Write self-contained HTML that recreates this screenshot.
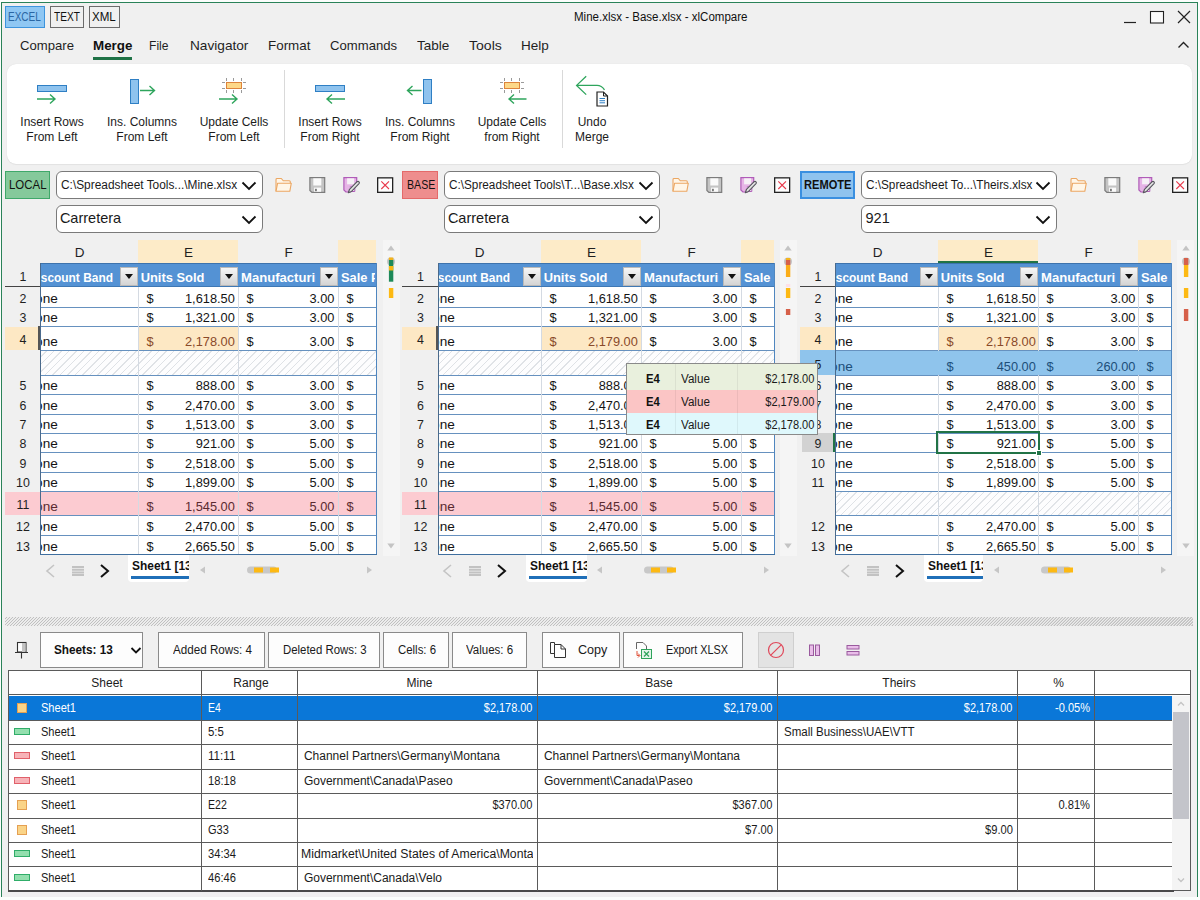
<!DOCTYPE html><html><head><meta charset="utf-8"><title>Mine.xlsx - Base.xlsx - xlCompare</title><style>
*{box-sizing:border-box;margin:0;padding:0}
html,body{width:1200px;height:900px;overflow:hidden;background:#fbfefc}
body{font-family:"Liberation Sans",sans-serif;font-size:12px;color:#1a1a1a;position:relative}
#win{position:absolute;left:1px;top:2px;width:1197px;height:895px;background:#f0f0f0;border:1px solid #2a8259;border-bottom:none}
.a{position:absolute}
.t{position:absolute;white-space:nowrap;line-height:1;color:#1a1a1a}
.w{color:#fff}
.box{position:absolute;border:1px solid #6b6b6b}
.combo{position:absolute;background:#fff;border:1px solid #7a7a7a;border-radius:6px}
.hl{position:absolute;background:#6691bf;height:1px}
.vl{position:absolute;background:#d4dae2;width:1px}
.fb{position:absolute;width:18px;height:19px;background:linear-gradient(#f6f6f6,#d4d4d4);border:1px solid #b9b9b9}
.fb:after{content:"";position:absolute;left:3.5px;top:6px;border:4.5px solid transparent;border-top:5px solid #111;border-bottom:none}
.hatch{position:absolute;background:repeating-linear-gradient(135deg,#fdfdfe 0,#fdfdfe 4px,#dfe2e6 4.3px,#dfe2e6 5px,#fdfdfe 5.3px)}
.btn{position:absolute;top:632px;height:36px;background:#fdfdfd;border:1px solid #8a8a8a}
.clip{position:absolute;overflow:hidden}
</style></head><body>
<div id="win"></div>
<div class="box" style="left:5px;top:6px;width:40px;height:22px;background:#8fc7f3;border-color:#3d94dd"></div>
<div class="box" style="left:50px;top:6px;width:34px;height:22px"></div>
<div class="box" style="left:89px;top:6px;width:31px;height:22px"></div>
<div class="t" style="top:11.4px;font-size:12.2px;color:#2a66a3;left:7.9px;transform:scaleX(0.82);transform-origin:0 0;">EXCEL</div>
<div class="t" style="top:11.4px;font-size:12.2px;color:#111;left:53.9px;transform:scaleX(0.83);transform-origin:0 0;">TEXT</div>
<div class="t" style="top:11.4px;font-size:12.2px;color:#111;left:91.9px;transform:scaleX(0.95);transform-origin:0 0;">XML</div>
<div class="t" style="top:10.5px;font-size:12px;color:#111;left:573.9px;transform:scaleX(0.96);transform-origin:0 0;">Mine.xlsx - Base.xlsx - xlCompare</div>
<svg class="a" style="left:1120px;top:6px" width="76" height="46" viewBox="0 0 76 46" fill="none" stroke="#222" stroke-width="1.2"><path d="M4 16.500H16"/><rect x="30.500" y="5.500" width="13" height="11.500" stroke-width="1.100" fill="#fbfbfb"/><path d="M58 5L70 17M70 5L58 17"/><path d="M58.500 41.500L63.500 36.500L68.500 41.500" stroke-width="1.400"/></svg>
<div class="t" style="top:39px;font-size:13px;color:#1f1f1f;left:19.9px;transform:scaleX(1.01);transform-origin:0 0;">Compare</div>
<div class="t" style="top:39px;font-size:13px;font-weight:bold;color:#111;left:93.15px;transform:scaleX(1.03);transform-origin:0 0;">Merge</div>
<div class="t" style="top:39px;font-size:13px;color:#1f1f1f;left:149.4px;transform:scaleX(0.93);transform-origin:0 0;">File</div>
<div class="t" style="top:39px;font-size:13px;color:#1f1f1f;left:189.9px;transform:scaleX(1.05);transform-origin:0 0;">Navigator</div>
<div class="t" style="top:39px;font-size:13px;color:#1f1f1f;left:268.4px;transform:scaleX(1.03);transform-origin:0 0;">Format</div>
<div class="t" style="top:39px;font-size:13px;color:#1f1f1f;left:330.4px;transform:scaleX(1.01);transform-origin:0 0;">Commands</div>
<div class="t" style="top:39px;font-size:13px;color:#1f1f1f;left:417.4px;transform:scaleX(1.04);transform-origin:0 0;">Table</div>
<div class="t" style="top:39px;font-size:13px;color:#1f1f1f;left:469.4px;transform:scaleX(1.08);transform-origin:0 0;">Tools</div>
<div class="t" style="top:39px;font-size:13px;color:#1f1f1f;left:521.4px;transform:scaleX(1.04);transform-origin:0 0;">Help</div>
<div class="a" style="left:93px;top:57px;width:39px;height:3px;background:#1f7246"></div>
<div class="a" style="left:7px;top:64px;width:1185px;height:100px;background:#fff;border-radius:9px;box-shadow:0 0 1px #d4d4d4,0 1px 1px #e4e4e4"></div>
<div class="a" style="left:284px;top:70px;width:1px;height:78px;background:#d9d9d9"></div>
<div class="a" style="left:562px;top:70px;width:1px;height:78px;background:#d9d9d9"></div>
<svg class="a" style="left:0;top:64px" width="640" height="100" viewBox="0 64 640 100" fill="none">
<g stroke="#2ea55c" stroke-width="1.4">
<path d="M37 99H55M50 94.500L55 99L50 103.500"/>
<path d="M140 90.500H154M149.500 86L154.500 90.500L149.500 95"/>
<path d="M219 99H237M232 94.500L237 99L232 103.500"/>
<path d="M345 99H327M332 94.500L327 99L332 103.500"/>
<path d="M421.500 90.500H408M412.500 86L407.500 90.500L412.500 95"/>
<path d="M526.500 99H509M514 94.500L509 99L514 103.500"/>
<path d="M586.200 76.200L576.600 85.400L586.200 94.600M577 85.400H597C601 85.400 603 87.500 604.500 89.800" stroke-width="1.300"/>
</g>
<g fill="#8fc3ee" stroke="#2f7fc4">
<rect x="37.500" y="85.500" width="29" height="6"/>
<rect x="130.500" y="79.500" width="8" height="24"/>
<rect x="315.500" y="85.500" width="29" height="6"/>
<rect x="423.500" y="79.500" width="8" height="24"/>
</g>
<g stroke="#9a9a9a" stroke-width="1">
<path d="M226.500 78V81M233.500 78V81M241.500 78V81M226.500 90V93M233.500 90V93M241.500 90V93M222 82.500H225M222 88.500H225M243 82.500H246M243 88.500H246"/>
<path d="M504.500 78V81M511.500 78V81M519.500 78V81M504.500 90V93M511.500 90V93M519.500 90V93M500 82.500H503M500 88.500H503M521 82.500H524M521 88.500H524"/>
</g>
<g fill="#fdd888" stroke="#dd843c">
<rect x="226.500" y="82.500" width="15" height="6"/>
<rect x="504.500" y="82.500" width="15" height="6"/>
</g>
<path d="M597 92H603.500L607.500 96V106H597Z" fill="#fff" stroke="#222" stroke-width="1.200"/>
<path d="M603.500 92V96H607.500" stroke="#222" stroke-width="1"/>
<path d="M599.500 98.500H605M599.500 100.700H605M599.500 102.800H605" stroke="#2f7fc4" stroke-width="1"/>
</svg>
<div class="t" style="top:115.7px;font-size:12px;color:#1c1c1c;left:20.32px;">Insert Rows</div>
<div class="t" style="top:130.7px;font-size:12px;color:#1c1c1c;left:26.33px;">From Left</div>
<div class="t" style="top:115.7px;font-size:12px;color:#1c1c1c;left:106.99px;">Ins. Columns</div>
<div class="t" style="top:130.7px;font-size:12px;color:#1c1c1c;left:116.33px;">From Left</div>
<div class="t" style="top:115.7px;font-size:12px;color:#1c1c1c;left:199.65px;">Update Cells</div>
<div class="t" style="top:130.7px;font-size:12px;color:#1c1c1c;left:208.33px;">From Left</div>
<div class="t" style="top:115.7px;font-size:12px;color:#1c1c1c;left:298.32px;">Insert Rows</div>
<div class="t" style="top:130.7px;font-size:12px;color:#1c1c1c;left:300.33px;">From Right</div>
<div class="t" style="top:115.7px;font-size:12px;color:#1c1c1c;left:384.99px;">Ins. Columns</div>
<div class="t" style="top:130.7px;font-size:12px;color:#1c1c1c;left:390.33px;">From Right</div>
<div class="t" style="top:115.7px;font-size:12px;color:#1c1c1c;left:477.65px;">Update Cells</div>
<div class="t" style="top:130.7px;font-size:12px;color:#1c1c1c;left:484.33px;">from Right</div>
<div class="t" style="top:115.7px;font-size:12px;color:#1c1c1c;left:577.66px;">Undo</div>
<div class="t" style="top:130.7px;font-size:12px;color:#1c1c1c;left:574.99px;">Merge</div>
<div class="a" style="left:5px;top:171px;width:45px;height:28px;background:#85c99b;border:1px solid #3fa86a"></div>
<div class="t" style="top:179.4px;font-size:12.2px;color:#111;left:8.9px;transform:scaleX(0.94);transform-origin:0 0;">LOCAL</div>
<div class="combo" style="left:56px;top:171px;width:207px;height:28px"></div>
<div class="t" style="top:179.3px;font-size:12px;color:#1a1a1a;left:60.9px;transform:scaleX(0.99);transform-origin:0 0;">C:\Spreadsheet Tools...\Mine.xlsx</div>
<svg class="a" style="left:240.5px;top:181px" width="16" height="10" viewBox="0 0 16 10" fill="none"><path d="M1.500 1.500L8 8L14.500 1.500" stroke="#111" stroke-width="1.800"/></svg>
<div class="combo" style="left:56px;top:205px;width:207px;height:28px"></div>
<div class="t" style="top:210.75px;font-size:14.5px;color:#1a1a1a;left:59.9px;">Carretera</div>
<svg class="a" style="left:240.5px;top:214.5px" width="16" height="10" viewBox="0 0 16 10" fill="none"><path d="M1.500 1.500L8 8L14.500 1.500" stroke="#111" stroke-width="1.800"/></svg>
<svg class="a" style="left:275px;top:176px" width="120" height="19" viewBox="0 0 120 19" fill="none"><path d="M1 15.300V3.400Q1 2.500 2 2.500H6.300L8.300 4.800H14.300Q15.300 4.800 15.300 5.800V7.200" fill="#fff6e8" stroke="#eba763" stroke-width="1.100"/><path d="M1 15.300L2.600 7.200H16.300L14.800 15.300Z" fill="#fff6e8" stroke="#eba763" stroke-width="1.100" stroke-linejoin="round"/><g transform="translate(34.300 0)"><path d="M0.600 1.700H15.400V16.400H2.600L0.600 14.400Z" fill="#c4c4c4" stroke="#7c7c7c" stroke-width="1.200"/><rect x="4" y="2.300" width="8" height="7.200" fill="#fafafa"/><rect x="4.800" y="11.600" width="7" height="4.200" fill="#fafafa"/><rect x="6" y="12.800" width="1.300" height="2.400" fill="#444"/></g><g transform="translate(68.300 0)"><path d="M0.600 1.700H13.400V7L7 16H2.600L0.600 14Z" fill="#e6b4e6" stroke="#b05cb8" stroke-width="1.200"/><rect x="3.800" y="2.300" width="7" height="6" fill="#f6f0f6"/><path d="M6.500 11H11.500V15.500H8" fill="#f6f0f6" stroke="#b05cb8" stroke-width="1"/><path d="M5 16.800L6.200 13.300L13.800 5.700Q14.800 4.900 15.700 5.800Q16.500 6.700 15.700 7.600L8.200 15.400Z" fill="#e4e4e4" stroke="#55555c" stroke-width="1.100" stroke-linejoin="round"/></g><g transform="translate(102 0)"><rect x="0.650" y="1.850" width="15" height="14.500" fill="#fdfdfd" stroke="#222" stroke-width="1.300"/><path d="M4.300 5.300L12 13M12 5.300L4.300 13" stroke="#e8384a" stroke-width="1.100"/></g></svg>
<div class="a" style="left:402px;top:171px;width:36px;height:28px;background:#ee8e8e;border:1px solid #e46a6a"></div>
<div class="t" style="top:179.4px;font-size:12.2px;color:#111;left:406.9px;transform:scaleX(0.87);transform-origin:0 0;">BASE</div>
<div class="combo" style="left:444px;top:171px;width:216px;height:28px"></div>
<div class="t" style="top:179.3px;font-size:12px;color:#1a1a1a;left:448.9px;transform:scaleX(0.98);transform-origin:0 0;">C:\Spreadsheet Tools\T...\Base.xlsx</div>
<svg class="a" style="left:637.5px;top:181px" width="16" height="10" viewBox="0 0 16 10" fill="none"><path d="M1.500 1.500L8 8L14.500 1.500" stroke="#111" stroke-width="1.800"/></svg>
<div class="combo" style="left:444px;top:205px;width:216px;height:28px"></div>
<div class="t" style="top:210.75px;font-size:14.5px;color:#1a1a1a;left:447.9px;">Carretera</div>
<svg class="a" style="left:637.5px;top:214.5px" width="16" height="10" viewBox="0 0 16 10" fill="none"><path d="M1.500 1.500L8 8L14.500 1.500" stroke="#111" stroke-width="1.800"/></svg>
<svg class="a" style="left:672px;top:176px" width="120" height="19" viewBox="0 0 120 19" fill="none"><path d="M1 15.300V3.400Q1 2.500 2 2.500H6.300L8.300 4.800H14.300Q15.300 4.800 15.300 5.800V7.200" fill="#fff6e8" stroke="#eba763" stroke-width="1.100"/><path d="M1 15.300L2.600 7.200H16.300L14.800 15.300Z" fill="#fff6e8" stroke="#eba763" stroke-width="1.100" stroke-linejoin="round"/><g transform="translate(34.300 0)"><path d="M0.600 1.700H15.400V16.400H2.600L0.600 14.400Z" fill="#c4c4c4" stroke="#7c7c7c" stroke-width="1.200"/><rect x="4" y="2.300" width="8" height="7.200" fill="#fafafa"/><rect x="4.800" y="11.600" width="7" height="4.200" fill="#fafafa"/><rect x="6" y="12.800" width="1.300" height="2.400" fill="#444"/></g><g transform="translate(68.300 0)"><path d="M0.600 1.700H13.400V7L7 16H2.600L0.600 14Z" fill="#e6b4e6" stroke="#b05cb8" stroke-width="1.200"/><rect x="3.800" y="2.300" width="7" height="6" fill="#f6f0f6"/><path d="M6.500 11H11.500V15.500H8" fill="#f6f0f6" stroke="#b05cb8" stroke-width="1"/><path d="M5 16.800L6.200 13.300L13.800 5.700Q14.800 4.900 15.700 5.800Q16.500 6.700 15.700 7.600L8.200 15.400Z" fill="#e4e4e4" stroke="#55555c" stroke-width="1.100" stroke-linejoin="round"/></g><g transform="translate(102 0)"><rect x="0.650" y="1.850" width="15" height="14.500" fill="#fdfdfd" stroke="#222" stroke-width="1.300"/><path d="M4.300 5.300L12 13M12 5.300L4.300 13" stroke="#e8384a" stroke-width="1.100"/></g></svg>
<div class="a" style="left:800px;top:171px;width:55px;height:28px;background:#8fc3ee;border:2px solid #3a8fe0"></div>
<div class="t" style="top:179.4px;font-size:12.2px;font-weight:bold;color:#111;left:803.9px;transform:scaleX(0.91);transform-origin:0 0;">REMOTE</div>
<div class="combo" style="left:861px;top:171px;width:196px;height:28px"></div>
<div class="t" style="top:179.3px;font-size:12px;color:#1a1a1a;left:865.9px;transform:scaleX(0.98);transform-origin:0 0;">C:\Spreadsheet To...\Theirs.xlsx</div>
<svg class="a" style="left:1034.5px;top:181px" width="16" height="10" viewBox="0 0 16 10" fill="none"><path d="M1.500 1.500L8 8L14.500 1.500" stroke="#111" stroke-width="1.800"/></svg>
<div class="combo" style="left:861px;top:205px;width:196px;height:28px"></div>
<div class="t" style="top:210.75px;font-size:14.5px;color:#1a1a1a;left:865.5px;">921</div>
<svg class="a" style="left:1034.5px;top:214.5px" width="16" height="10" viewBox="0 0 16 10" fill="none"><path d="M1.500 1.500L8 8L14.500 1.500" stroke="#111" stroke-width="1.800"/></svg>
<svg class="a" style="left:1070px;top:176px" width="120" height="19" viewBox="0 0 120 19" fill="none"><path d="M1 15.300V3.400Q1 2.500 2 2.500H6.300L8.300 4.800H14.300Q15.300 4.800 15.300 5.800V7.200" fill="#fff6e8" stroke="#eba763" stroke-width="1.100"/><path d="M1 15.300L2.600 7.200H16.300L14.800 15.300Z" fill="#fff6e8" stroke="#eba763" stroke-width="1.100" stroke-linejoin="round"/><g transform="translate(34.300 0)"><path d="M0.600 1.700H15.400V16.400H2.600L0.600 14.400Z" fill="#c4c4c4" stroke="#7c7c7c" stroke-width="1.200"/><rect x="4" y="2.300" width="8" height="7.200" fill="#fafafa"/><rect x="4.800" y="11.600" width="7" height="4.200" fill="#fafafa"/><rect x="6" y="12.800" width="1.300" height="2.400" fill="#444"/></g><g transform="translate(68.300 0)"><path d="M0.600 1.700H13.400V7L7 16H2.600L0.600 14Z" fill="#e6b4e6" stroke="#b05cb8" stroke-width="1.200"/><rect x="3.800" y="2.300" width="7" height="6" fill="#f6f0f6"/><path d="M6.500 11H11.500V15.500H8" fill="#f6f0f6" stroke="#b05cb8" stroke-width="1"/><path d="M5 16.800L6.200 13.300L13.800 5.700Q14.800 4.900 15.700 5.800Q16.500 6.700 15.700 7.600L8.200 15.400Z" fill="#e4e4e4" stroke="#55555c" stroke-width="1.100" stroke-linejoin="round"/></g><g transform="translate(102 0)"><rect x="0.650" y="1.850" width="15" height="14.500" fill="#fdfdfd" stroke="#222" stroke-width="1.300"/><path d="M4.300 5.300L12 13M12 5.300L4.300 13" stroke="#e8384a" stroke-width="1.100"/></g></svg>
<div class="a" style="left:138px;top:240px;width:100px;height:23px;background:#fdebc8"></div>
<div class="a" style="left:338px;top:240px;width:38px;height:23px;background:#fdebc8"></div>
<div class="t" style="top:246.25px;font-size:13.5px;color:#1f1f1f;left:74.63px;">D</div>
<div class="t" style="top:246.25px;font-size:13.5px;color:#1f1f1f;left:184px;">E</div>
<div class="t" style="top:246.25px;font-size:13.5px;color:#1f1f1f;left:284.38px;">F</div>
<div class="a" style="left:40px;top:263px;width:336px;height:292px;background:#fff"></div>
<div class="a" style="left:40px;top:263px;width:336px;height:24px;background:#5492d4;border-top:1px solid #3d73ad"></div>
<div class="t" style="top:270.8px;font-size:12.4px;color:#1f1f1f;left:19.55px;">1</div>
<div class="a" style="left:5px;top:286px;width:35px;height:1px;background:#444"></div>
<div class="clip" style="left:41px;top:264px;width:72.3px;height:22px">
<div class="t w" style="right:0;top:7.55px;font-size:12.9px;font-weight:bold;transform:scaleX(.925);transform-origin:100% 0">Discount Band</div></div>
<div class="fb" style="left:120px;top:267px"></div>
<div class="t" style="top:271.55px;font-size:12.9px;font-weight:bold;color:#fff;left:140.7px;">Units Sold</div>
<div class="fb" style="left:220px;top:267px"></div>
<div class="clip" style="left:241px;top:264px;width:74.8px;height:22px">
<div class="t w" style="left:0;top:7.45px;font-size:13.1px;font-weight:bold">Manufacturing Price</div></div>
<div class="fb" style="left:320px;top:267px"></div>
<div class="clip" style="left:341px;top:264px;width:34px;height:22px">
<div class="t w" style="left:0;top:7.55px;font-size:12.9px;font-weight:bold">Sale Price</div></div>
<div class="t" style="top:292.6px;font-size:12.4px;color:#1f1f1f;left:19.55px;">2</div>
<div class="clip" style="left:41px;top:288px;width:40px;height:19px"><div class="t" style="left:-5.9px;top:4.4px;font-size:13.6px;color:#141414">one</div></div>
<div class="t" style="top:292.6px;font-size:12.8px;color:#141414;left:146.5px;">$</div>
<div class="t" style="top:292.6px;font-size:12.8px;color:#141414;right:965.2px;">1,618.50</div>
<div class="t" style="top:292.6px;font-size:12.8px;color:#141414;left:246.5px;">$</div>
<div class="t" style="top:292.6px;font-size:12.8px;color:#141414;right:865.6px;">3.00</div>
<div class="t" style="top:292.6px;font-size:12.8px;color:#141414;left:346.5px;">$</div>
<div class="t" style="top:311.6px;font-size:12.4px;color:#1f1f1f;left:19.55px;">3</div>
<div class="clip" style="left:41px;top:308px;width:40px;height:18px"><div class="t" style="left:-5.9px;top:3.4px;font-size:13.6px;color:#141414">one</div></div>
<div class="t" style="top:311.6px;font-size:12.8px;color:#141414;left:146.5px;">$</div>
<div class="t" style="top:311.6px;font-size:12.8px;color:#141414;right:965.2px;">1,321.00</div>
<div class="t" style="top:311.6px;font-size:12.8px;color:#141414;left:246.5px;">$</div>
<div class="t" style="top:311.6px;font-size:12.8px;color:#141414;right:865.6px;">3.00</div>
<div class="t" style="top:311.6px;font-size:12.8px;color:#141414;left:346.5px;">$</div>
<div class="a" style="left:5px;top:327px;width:35px;height:23px;background:#fde8c4"></div>
<div class="a" style="left:138px;top:327px;width:100px;height:23px;background:#fde8c4"></div>
<div class="a" style="left:38px;top:326px;width:2px;height:24px;background:#555"></div>
<div class="t" style="top:334.1px;font-size:12.4px;color:#1f1f1f;left:19.55px;">4</div>
<div class="clip" style="left:41px;top:327px;width:40px;height:23px"><div class="t" style="left:-5.9px;top:8.4px;font-size:13.6px;color:#141414">one</div></div>
<div class="t" style="top:335.6px;font-size:12.8px;color:#8a4a2a;left:146.5px;">$</div>
<div class="t" style="top:335.6px;font-size:12.8px;color:#8a4a2a;right:965.2px;">2,178.00</div>
<div class="t" style="top:335.6px;font-size:12.8px;color:#141414;left:246.5px;">$</div>
<div class="t" style="top:335.6px;font-size:12.8px;color:#141414;right:865.6px;">3.00</div>
<div class="t" style="top:335.6px;font-size:12.8px;color:#141414;left:346.5px;">$</div>
<div class="hatch" style="left:40px;top:351px;width:336px;height:24px"></div>
<div class="t" style="top:379.6px;font-size:12.4px;color:#1f1f1f;left:19.55px;">5</div>
<div class="clip" style="left:41px;top:376px;width:40px;height:18px"><div class="t" style="left:-5.9px;top:3.4px;font-size:13.6px;color:#141414">one</div></div>
<div class="t" style="top:379.6px;font-size:12.8px;color:#141414;left:146.5px;">$</div>
<div class="t" style="top:379.6px;font-size:12.8px;color:#141414;right:965.2px;">888.00</div>
<div class="t" style="top:379.6px;font-size:12.8px;color:#141414;left:246.5px;">$</div>
<div class="t" style="top:379.6px;font-size:12.8px;color:#141414;right:865.6px;">3.00</div>
<div class="t" style="top:379.6px;font-size:12.8px;color:#141414;left:346.5px;">$</div>
<div class="t" style="top:399.6px;font-size:12.4px;color:#1f1f1f;left:19.55px;">6</div>
<div class="clip" style="left:41px;top:395px;width:40px;height:19px"><div class="t" style="left:-5.9px;top:4.4px;font-size:13.6px;color:#141414">one</div></div>
<div class="t" style="top:399.6px;font-size:12.8px;color:#141414;left:146.5px;">$</div>
<div class="t" style="top:399.6px;font-size:12.8px;color:#141414;right:965.2px;">2,470.00</div>
<div class="t" style="top:399.6px;font-size:12.8px;color:#141414;left:246.5px;">$</div>
<div class="t" style="top:399.6px;font-size:12.8px;color:#141414;right:865.6px;">3.00</div>
<div class="t" style="top:399.6px;font-size:12.8px;color:#141414;left:346.5px;">$</div>
<div class="t" style="top:418.6px;font-size:12.4px;color:#1f1f1f;left:19.55px;">7</div>
<div class="clip" style="left:41px;top:415px;width:40px;height:18px"><div class="t" style="left:-5.9px;top:3.4px;font-size:13.6px;color:#141414">one</div></div>
<div class="t" style="top:418.6px;font-size:12.8px;color:#141414;left:146.5px;">$</div>
<div class="t" style="top:418.6px;font-size:12.8px;color:#141414;right:965.2px;">1,513.00</div>
<div class="t" style="top:418.6px;font-size:12.8px;color:#141414;left:246.5px;">$</div>
<div class="t" style="top:418.6px;font-size:12.8px;color:#141414;right:865.6px;">3.00</div>
<div class="t" style="top:418.6px;font-size:12.8px;color:#141414;left:346.5px;">$</div>
<div class="t" style="top:437.6px;font-size:12.4px;color:#1f1f1f;left:19.55px;">8</div>
<div class="clip" style="left:41px;top:434px;width:40px;height:18px"><div class="t" style="left:-5.9px;top:3.4px;font-size:13.6px;color:#141414">one</div></div>
<div class="t" style="top:437.6px;font-size:12.8px;color:#141414;left:146.5px;">$</div>
<div class="t" style="top:437.6px;font-size:12.8px;color:#141414;right:965.2px;">921.00</div>
<div class="t" style="top:437.6px;font-size:12.8px;color:#141414;left:246.5px;">$</div>
<div class="t" style="top:437.6px;font-size:12.8px;color:#141414;right:865.6px;">5.00</div>
<div class="t" style="top:437.6px;font-size:12.8px;color:#141414;left:346.5px;">$</div>
<div class="t" style="top:457.6px;font-size:12.4px;color:#1f1f1f;left:19.55px;">9</div>
<div class="clip" style="left:41px;top:453px;width:40px;height:19px"><div class="t" style="left:-5.9px;top:4.4px;font-size:13.6px;color:#141414">one</div></div>
<div class="t" style="top:457.6px;font-size:12.8px;color:#141414;left:146.5px;">$</div>
<div class="t" style="top:457.6px;font-size:12.8px;color:#141414;right:965.2px;">2,518.00</div>
<div class="t" style="top:457.6px;font-size:12.8px;color:#141414;left:246.5px;">$</div>
<div class="t" style="top:457.6px;font-size:12.8px;color:#141414;right:865.6px;">5.00</div>
<div class="t" style="top:457.6px;font-size:12.8px;color:#141414;left:346.5px;">$</div>
<div class="t" style="top:476.6px;font-size:12.4px;color:#1f1f1f;left:16.1px;">10</div>
<div class="clip" style="left:41px;top:473px;width:40px;height:18px"><div class="t" style="left:-5.9px;top:3.4px;font-size:13.6px;color:#141414">one</div></div>
<div class="t" style="top:476.6px;font-size:12.8px;color:#141414;left:146.5px;">$</div>
<div class="t" style="top:476.6px;font-size:12.8px;color:#141414;right:965.2px;">1,899.00</div>
<div class="t" style="top:476.6px;font-size:12.8px;color:#141414;left:246.5px;">$</div>
<div class="t" style="top:476.6px;font-size:12.8px;color:#141414;right:865.6px;">5.00</div>
<div class="t" style="top:476.6px;font-size:12.8px;color:#141414;left:346.5px;">$</div>
<div class="a" style="left:5px;top:492px;width:371px;height:23px;background:#fccbd1"></div>
<div class="t" style="top:499.1px;font-size:12.4px;color:#1f1f1f;left:16.56px;">11</div>
<div class="clip" style="left:41px;top:492px;width:40px;height:23px"><div class="t" style="left:-5.9px;top:8.4px;font-size:13.6px;color:#5a2a30">one</div></div>
<div class="t" style="top:500.6px;font-size:12.8px;color:#5a2a30;left:146.5px;">$</div>
<div class="t" style="top:500.6px;font-size:12.8px;color:#5a2a30;right:965.2px;">1,545.00</div>
<div class="t" style="top:500.6px;font-size:12.8px;color:#5a2a30;left:246.5px;">$</div>
<div class="t" style="top:500.6px;font-size:12.8px;color:#5a2a30;right:865.6px;">5.00</div>
<div class="t" style="top:500.6px;font-size:12.8px;color:#5a2a30;left:346.5px;">$</div>
<div class="t" style="top:520.6px;font-size:12.4px;color:#1f1f1f;left:16.1px;">12</div>
<div class="clip" style="left:41px;top:516px;width:40px;height:19px"><div class="t" style="left:-5.9px;top:4.4px;font-size:13.6px;color:#141414">one</div></div>
<div class="t" style="top:520.6px;font-size:12.8px;color:#141414;left:146.5px;">$</div>
<div class="t" style="top:520.6px;font-size:12.8px;color:#141414;right:965.2px;">2,470.00</div>
<div class="t" style="top:520.6px;font-size:12.8px;color:#141414;left:246.5px;">$</div>
<div class="t" style="top:520.6px;font-size:12.8px;color:#141414;right:865.6px;">5.00</div>
<div class="t" style="top:520.6px;font-size:12.8px;color:#141414;left:346.5px;">$</div>
<div class="t" style="top:540.6px;font-size:12.4px;color:#1f1f1f;left:16.1px;">13</div>
<div class="clip" style="left:41px;top:536px;width:40px;height:19px"><div class="t" style="left:-5.9px;top:4.4px;font-size:13.6px;color:#141414">one</div></div>
<div class="t" style="top:540.6px;font-size:12.8px;color:#141414;left:146.5px;">$</div>
<div class="t" style="top:540.6px;font-size:12.8px;color:#141414;right:965.2px;">2,665.50</div>
<div class="t" style="top:540.6px;font-size:12.8px;color:#141414;left:246.5px;">$</div>
<div class="t" style="top:540.6px;font-size:12.8px;color:#141414;right:865.6px;">5.00</div>
<div class="t" style="top:540.6px;font-size:12.8px;color:#141414;left:346.5px;">$</div>
<div class="hl" style="left:40px;top:307px;width:336px"></div>
<div class="hl" style="left:40px;top:326px;width:336px"></div>
<div class="hl" style="left:40px;top:350px;width:336px"></div>
<div class="hl" style="left:40px;top:375px;width:336px"></div>
<div class="hl" style="left:40px;top:394px;width:336px"></div>
<div class="hl" style="left:40px;top:414px;width:336px"></div>
<div class="hl" style="left:40px;top:433px;width:336px"></div>
<div class="hl" style="left:40px;top:452px;width:336px"></div>
<div class="hl" style="left:40px;top:472px;width:336px"></div>
<div class="hl" style="left:40px;top:491px;width:336px"></div>
<div class="hl" style="left:40px;top:515px;width:336px"></div>
<div class="hl" style="left:40px;top:535px;width:336px"></div>
<div class="hl" style="left:40px;top:286px;width:336px;background:#3f78b4"></div>
<div class="vl" style="left:138px;top:287px;height:268px"></div>
<div class="vl" style="left:238px;top:287px;height:268px"></div>
<div class="vl" style="left:338px;top:287px;height:268px"></div>
<div class="a" style="left:40px;top:263px;width:1px;height:292px;background:#4a6a8c"></div>
<div class="a" style="left:376px;top:263px;width:1px;height:292px;background:#4f86bf"></div>
<div class="a" style="left:40px;top:554px;width:337px;height:1px;background:#3f6f9f"></div>
<div class="a" style="left:541px;top:240px;width:100px;height:23px;background:#fdebc8"></div>
<div class="a" style="left:741px;top:240px;width:33px;height:23px;background:#fdebc8"></div>
<div class="t" style="top:246.25px;font-size:13.5px;color:#1f1f1f;left:474.63px;">D</div>
<div class="t" style="top:246.25px;font-size:13.5px;color:#1f1f1f;left:587px;">E</div>
<div class="t" style="top:246.25px;font-size:13.5px;color:#1f1f1f;left:687.38px;">F</div>
<div class="a" style="left:438px;top:263px;width:336px;height:292px;background:#fff"></div>
<div class="a" style="left:438px;top:263px;width:336px;height:24px;background:#5492d4;border-top:1px solid #3d73ad"></div>
<div class="t" style="top:270.8px;font-size:12.4px;color:#1f1f1f;left:417.05px;">1</div>
<div class="a" style="left:402px;top:286px;width:36px;height:1px;background:#444"></div>
<div class="clip" style="left:439px;top:264px;width:71.3px;height:22px">
<div class="t w" style="right:0;top:7.55px;font-size:12.9px;font-weight:bold;transform:scaleX(.925);transform-origin:100% 0">Discount Band</div></div>
<div class="fb" style="left:523px;top:267px"></div>
<div class="t" style="top:271.55px;font-size:12.9px;font-weight:bold;color:#fff;left:543.7px;">Units Sold</div>
<div class="fb" style="left:623px;top:267px"></div>
<div class="clip" style="left:644px;top:264px;width:74.8px;height:22px">
<div class="t w" style="left:0;top:7.45px;font-size:13.1px;font-weight:bold">Manufacturing Price</div></div>
<div class="fb" style="left:723px;top:267px"></div>
<div class="clip" style="left:744px;top:264px;width:29px;height:22px">
<div class="t w" style="left:0;top:7.55px;font-size:12.9px;font-weight:bold">Sale Price</div></div>
<div class="t" style="top:292.6px;font-size:12.4px;color:#1f1f1f;left:417.05px;">2</div>
<div class="clip" style="left:439px;top:288px;width:40px;height:19px"><div class="t" style="left:-6.9px;top:4.4px;font-size:13.6px;color:#141414">one</div></div>
<div class="t" style="top:292.6px;font-size:12.8px;color:#141414;left:549.5px;">$</div>
<div class="t" style="top:292.6px;font-size:12.8px;color:#141414;right:562.2px;">1,618.50</div>
<div class="t" style="top:292.6px;font-size:12.8px;color:#141414;left:649.5px;">$</div>
<div class="t" style="top:292.6px;font-size:12.8px;color:#141414;right:462.6px;">3.00</div>
<div class="t" style="top:292.6px;font-size:12.8px;color:#141414;left:749.5px;">$</div>
<div class="t" style="top:311.6px;font-size:12.4px;color:#1f1f1f;left:417.05px;">3</div>
<div class="clip" style="left:439px;top:308px;width:40px;height:18px"><div class="t" style="left:-6.9px;top:3.4px;font-size:13.6px;color:#141414">one</div></div>
<div class="t" style="top:311.6px;font-size:12.8px;color:#141414;left:549.5px;">$</div>
<div class="t" style="top:311.6px;font-size:12.8px;color:#141414;right:562.2px;">1,321.00</div>
<div class="t" style="top:311.6px;font-size:12.8px;color:#141414;left:649.5px;">$</div>
<div class="t" style="top:311.6px;font-size:12.8px;color:#141414;right:462.6px;">3.00</div>
<div class="t" style="top:311.6px;font-size:12.8px;color:#141414;left:749.5px;">$</div>
<div class="a" style="left:402px;top:327px;width:36px;height:23px;background:#fde8c4"></div>
<div class="a" style="left:541px;top:327px;width:100px;height:23px;background:#fde8c4"></div>
<div class="a" style="left:436px;top:326px;width:2px;height:24px;background:#555"></div>
<div class="t" style="top:334.1px;font-size:12.4px;color:#1f1f1f;left:417.05px;">4</div>
<div class="clip" style="left:439px;top:327px;width:40px;height:23px"><div class="t" style="left:-6.9px;top:8.4px;font-size:13.6px;color:#141414">one</div></div>
<div class="t" style="top:335.6px;font-size:12.8px;color:#8a4a2a;left:549.5px;">$</div>
<div class="t" style="top:335.6px;font-size:12.8px;color:#8a4a2a;right:562.2px;">2,179.00</div>
<div class="t" style="top:335.6px;font-size:12.8px;color:#141414;left:649.5px;">$</div>
<div class="t" style="top:335.6px;font-size:12.8px;color:#141414;right:462.6px;">3.00</div>
<div class="t" style="top:335.6px;font-size:12.8px;color:#141414;left:749.5px;">$</div>
<div class="hatch" style="left:438px;top:351px;width:336px;height:24px"></div>
<div class="t" style="top:379.6px;font-size:12.4px;color:#1f1f1f;left:417.05px;">5</div>
<div class="clip" style="left:439px;top:376px;width:40px;height:18px"><div class="t" style="left:-6.9px;top:3.4px;font-size:13.6px;color:#141414">one</div></div>
<div class="t" style="top:379.6px;font-size:12.8px;color:#141414;left:549.5px;">$</div>
<div class="t" style="top:379.6px;font-size:12.8px;color:#141414;right:562.2px;">888.00</div>
<div class="t" style="top:379.6px;font-size:12.8px;color:#141414;left:649.5px;">$</div>
<div class="t" style="top:379.6px;font-size:12.8px;color:#141414;right:462.6px;">3.00</div>
<div class="t" style="top:379.6px;font-size:12.8px;color:#141414;left:749.5px;">$</div>
<div class="t" style="top:399.6px;font-size:12.4px;color:#1f1f1f;left:417.05px;">6</div>
<div class="clip" style="left:439px;top:395px;width:40px;height:19px"><div class="t" style="left:-6.9px;top:4.4px;font-size:13.6px;color:#141414">one</div></div>
<div class="t" style="top:399.6px;font-size:12.8px;color:#141414;left:549.5px;">$</div>
<div class="t" style="top:399.6px;font-size:12.8px;color:#141414;right:562.2px;">2,470.00</div>
<div class="t" style="top:399.6px;font-size:12.8px;color:#141414;left:649.5px;">$</div>
<div class="t" style="top:399.6px;font-size:12.8px;color:#141414;right:462.6px;">3.00</div>
<div class="t" style="top:399.6px;font-size:12.8px;color:#141414;left:749.5px;">$</div>
<div class="t" style="top:418.6px;font-size:12.4px;color:#1f1f1f;left:417.05px;">7</div>
<div class="clip" style="left:439px;top:415px;width:40px;height:18px"><div class="t" style="left:-6.9px;top:3.4px;font-size:13.6px;color:#141414">one</div></div>
<div class="t" style="top:418.6px;font-size:12.8px;color:#141414;left:549.5px;">$</div>
<div class="t" style="top:418.6px;font-size:12.8px;color:#141414;right:562.2px;">1,513.00</div>
<div class="t" style="top:418.6px;font-size:12.8px;color:#141414;left:649.5px;">$</div>
<div class="t" style="top:418.6px;font-size:12.8px;color:#141414;right:462.6px;">3.00</div>
<div class="t" style="top:418.6px;font-size:12.8px;color:#141414;left:749.5px;">$</div>
<div class="t" style="top:437.6px;font-size:12.4px;color:#1f1f1f;left:417.05px;">8</div>
<div class="clip" style="left:439px;top:434px;width:40px;height:18px"><div class="t" style="left:-6.9px;top:3.4px;font-size:13.6px;color:#141414">one</div></div>
<div class="t" style="top:437.6px;font-size:12.8px;color:#141414;left:549.5px;">$</div>
<div class="t" style="top:437.6px;font-size:12.8px;color:#141414;right:562.2px;">921.00</div>
<div class="t" style="top:437.6px;font-size:12.8px;color:#141414;left:649.5px;">$</div>
<div class="t" style="top:437.6px;font-size:12.8px;color:#141414;right:462.6px;">5.00</div>
<div class="t" style="top:437.6px;font-size:12.8px;color:#141414;left:749.5px;">$</div>
<div class="t" style="top:457.6px;font-size:12.4px;color:#1f1f1f;left:417.05px;">9</div>
<div class="clip" style="left:439px;top:453px;width:40px;height:19px"><div class="t" style="left:-6.9px;top:4.4px;font-size:13.6px;color:#141414">one</div></div>
<div class="t" style="top:457.6px;font-size:12.8px;color:#141414;left:549.5px;">$</div>
<div class="t" style="top:457.6px;font-size:12.8px;color:#141414;right:562.2px;">2,518.00</div>
<div class="t" style="top:457.6px;font-size:12.8px;color:#141414;left:649.5px;">$</div>
<div class="t" style="top:457.6px;font-size:12.8px;color:#141414;right:462.6px;">5.00</div>
<div class="t" style="top:457.6px;font-size:12.8px;color:#141414;left:749.5px;">$</div>
<div class="t" style="top:476.6px;font-size:12.4px;color:#1f1f1f;left:413.6px;">10</div>
<div class="clip" style="left:439px;top:473px;width:40px;height:18px"><div class="t" style="left:-6.9px;top:3.4px;font-size:13.6px;color:#141414">one</div></div>
<div class="t" style="top:476.6px;font-size:12.8px;color:#141414;left:549.5px;">$</div>
<div class="t" style="top:476.6px;font-size:12.8px;color:#141414;right:562.2px;">1,899.00</div>
<div class="t" style="top:476.6px;font-size:12.8px;color:#141414;left:649.5px;">$</div>
<div class="t" style="top:476.6px;font-size:12.8px;color:#141414;right:462.6px;">5.00</div>
<div class="t" style="top:476.6px;font-size:12.8px;color:#141414;left:749.5px;">$</div>
<div class="a" style="left:402px;top:492px;width:372px;height:23px;background:#fccbd1"></div>
<div class="t" style="top:499.1px;font-size:12.4px;color:#1f1f1f;left:414.06px;">11</div>
<div class="clip" style="left:439px;top:492px;width:40px;height:23px"><div class="t" style="left:-6.9px;top:8.4px;font-size:13.6px;color:#5a2a30">one</div></div>
<div class="t" style="top:500.6px;font-size:12.8px;color:#5a2a30;left:549.5px;">$</div>
<div class="t" style="top:500.6px;font-size:12.8px;color:#5a2a30;right:562.2px;">1,545.00</div>
<div class="t" style="top:500.6px;font-size:12.8px;color:#5a2a30;left:649.5px;">$</div>
<div class="t" style="top:500.6px;font-size:12.8px;color:#5a2a30;right:462.6px;">5.00</div>
<div class="t" style="top:500.6px;font-size:12.8px;color:#5a2a30;left:749.5px;">$</div>
<div class="t" style="top:520.6px;font-size:12.4px;color:#1f1f1f;left:413.6px;">12</div>
<div class="clip" style="left:439px;top:516px;width:40px;height:19px"><div class="t" style="left:-6.9px;top:4.4px;font-size:13.6px;color:#141414">one</div></div>
<div class="t" style="top:520.6px;font-size:12.8px;color:#141414;left:549.5px;">$</div>
<div class="t" style="top:520.6px;font-size:12.8px;color:#141414;right:562.2px;">2,470.00</div>
<div class="t" style="top:520.6px;font-size:12.8px;color:#141414;left:649.5px;">$</div>
<div class="t" style="top:520.6px;font-size:12.8px;color:#141414;right:462.6px;">5.00</div>
<div class="t" style="top:520.6px;font-size:12.8px;color:#141414;left:749.5px;">$</div>
<div class="t" style="top:540.6px;font-size:12.4px;color:#1f1f1f;left:413.6px;">13</div>
<div class="clip" style="left:439px;top:536px;width:40px;height:19px"><div class="t" style="left:-6.9px;top:4.4px;font-size:13.6px;color:#141414">one</div></div>
<div class="t" style="top:540.6px;font-size:12.8px;color:#141414;left:549.5px;">$</div>
<div class="t" style="top:540.6px;font-size:12.8px;color:#141414;right:562.2px;">2,665.50</div>
<div class="t" style="top:540.6px;font-size:12.8px;color:#141414;left:649.5px;">$</div>
<div class="t" style="top:540.6px;font-size:12.8px;color:#141414;right:462.6px;">5.00</div>
<div class="t" style="top:540.6px;font-size:12.8px;color:#141414;left:749.5px;">$</div>
<div class="hl" style="left:438px;top:307px;width:336px"></div>
<div class="hl" style="left:438px;top:326px;width:336px"></div>
<div class="hl" style="left:438px;top:350px;width:336px"></div>
<div class="hl" style="left:438px;top:375px;width:336px"></div>
<div class="hl" style="left:438px;top:394px;width:336px"></div>
<div class="hl" style="left:438px;top:414px;width:336px"></div>
<div class="hl" style="left:438px;top:433px;width:336px"></div>
<div class="hl" style="left:438px;top:452px;width:336px"></div>
<div class="hl" style="left:438px;top:472px;width:336px"></div>
<div class="hl" style="left:438px;top:491px;width:336px"></div>
<div class="hl" style="left:438px;top:515px;width:336px"></div>
<div class="hl" style="left:438px;top:535px;width:336px"></div>
<div class="hl" style="left:438px;top:286px;width:336px;background:#3f78b4"></div>
<div class="vl" style="left:541px;top:287px;height:268px"></div>
<div class="vl" style="left:641px;top:287px;height:268px"></div>
<div class="vl" style="left:741px;top:287px;height:268px"></div>
<div class="a" style="left:438px;top:263px;width:1px;height:292px;background:#4a6a8c"></div>
<div class="a" style="left:774px;top:263px;width:1px;height:292px;background:#4f86bf"></div>
<div class="a" style="left:438px;top:554px;width:337px;height:1px;background:#3f6f9f"></div>
<div class="a" style="left:938px;top:240px;width:100px;height:23px;background:#fdebc8"></div>
<div class="a" style="left:1138px;top:240px;width:33px;height:23px;background:#fdebc8"></div>
<div class="a" style="left:938px;top:261px;width:100px;height:2px;background:#217346"></div>
<div class="t" style="top:246.25px;font-size:13.5px;color:#1f1f1f;left:872.63px;">D</div>
<div class="t" style="top:246.25px;font-size:13.5px;color:#1f1f1f;left:984px;">E</div>
<div class="t" style="top:246.25px;font-size:13.5px;color:#1f1f1f;left:1084.38px;">F</div>
<div class="a" style="left:835px;top:263px;width:336px;height:292px;background:#fff"></div>
<div class="a" style="left:835px;top:263px;width:336px;height:24px;background:#5492d4;border-top:1px solid #3d73ad"></div>
<div class="t" style="top:270.8px;font-size:12.4px;color:#1f1f1f;left:814.55px;">1</div>
<div class="a" style="left:800px;top:286px;width:35px;height:1px;background:#444"></div>
<div class="clip" style="left:836px;top:264px;width:71.8px;height:22px">
<div class="t w" style="right:0;top:7.55px;font-size:12.9px;font-weight:bold;transform:scaleX(.925);transform-origin:100% 0">Discount Band</div></div>
<div class="fb" style="left:920px;top:267px"></div>
<div class="t" style="top:271.55px;font-size:12.9px;font-weight:bold;color:#fff;left:940.7px;">Units Sold</div>
<div class="fb" style="left:1020px;top:267px"></div>
<div class="clip" style="left:1041px;top:264px;width:74.8px;height:22px">
<div class="t w" style="left:0;top:7.45px;font-size:13.1px;font-weight:bold">Manufacturing Price</div></div>
<div class="fb" style="left:1120px;top:267px"></div>
<div class="clip" style="left:1141px;top:264px;width:29px;height:22px">
<div class="t w" style="left:0;top:7.55px;font-size:12.9px;font-weight:bold">Sale Price</div></div>
<div class="t" style="top:292.6px;font-size:12.4px;color:#1f1f1f;left:814.55px;">2</div>
<div class="clip" style="left:836px;top:288px;width:40px;height:19px"><div class="t" style="left:-5.9px;top:4.4px;font-size:13.6px;color:#141414">one</div></div>
<div class="t" style="top:292.6px;font-size:12.8px;color:#141414;left:946.5px;">$</div>
<div class="t" style="top:292.6px;font-size:12.8px;color:#141414;right:164.2px;">1,618.50</div>
<div class="t" style="top:292.6px;font-size:12.8px;color:#141414;left:1046.5px;">$</div>
<div class="t" style="top:292.6px;font-size:12.8px;color:#141414;right:64.6px;">3.00</div>
<div class="t" style="top:292.6px;font-size:12.8px;color:#141414;left:1146.5px;">$</div>
<div class="t" style="top:311.6px;font-size:12.4px;color:#1f1f1f;left:814.55px;">3</div>
<div class="clip" style="left:836px;top:308px;width:40px;height:18px"><div class="t" style="left:-5.9px;top:3.4px;font-size:13.6px;color:#141414">one</div></div>
<div class="t" style="top:311.6px;font-size:12.8px;color:#141414;left:946.5px;">$</div>
<div class="t" style="top:311.6px;font-size:12.8px;color:#141414;right:164.2px;">1,321.00</div>
<div class="t" style="top:311.6px;font-size:12.8px;color:#141414;left:1046.5px;">$</div>
<div class="t" style="top:311.6px;font-size:12.8px;color:#141414;right:64.6px;">3.00</div>
<div class="t" style="top:311.6px;font-size:12.8px;color:#141414;left:1146.5px;">$</div>
<div class="a" style="left:800px;top:327px;width:35px;height:23px;background:#fde8c4"></div>
<div class="a" style="left:938px;top:327px;width:100px;height:23px;background:#fde8c4"></div>
<div class="t" style="top:334.1px;font-size:12.4px;color:#1f1f1f;left:814.55px;">4</div>
<div class="clip" style="left:836px;top:327px;width:40px;height:23px"><div class="t" style="left:-5.9px;top:8.4px;font-size:13.6px;color:#141414">one</div></div>
<div class="t" style="top:335.6px;font-size:12.8px;color:#8a4a2a;left:946.5px;">$</div>
<div class="t" style="top:335.6px;font-size:12.8px;color:#8a4a2a;right:164.2px;">2,178.00</div>
<div class="t" style="top:335.6px;font-size:12.8px;color:#141414;left:1046.5px;">$</div>
<div class="t" style="top:335.6px;font-size:12.8px;color:#141414;right:64.6px;">3.00</div>
<div class="t" style="top:335.6px;font-size:12.8px;color:#141414;left:1146.5px;">$</div>
<div class="a" style="left:800px;top:350px;width:371px;height:25px;background:#8fc4ec"></div>
<div class="t" style="top:359.1px;font-size:12.4px;color:#1f1f1f;left:814.55px;">5</div>
<div class="clip" style="left:836px;top:351px;width:40px;height:24px"><div class="t" style="left:-5.9px;top:9.4px;font-size:13.6px;color:#1d4f7a">one</div></div>
<div class="t" style="top:360.6px;font-size:12.8px;color:#1d4f7a;left:946.5px;">$</div>
<div class="t" style="top:360.6px;font-size:12.8px;color:#1d4f7a;right:164.2px;">450.00</div>
<div class="t" style="top:360.6px;font-size:12.8px;color:#1d4f7a;left:1046.5px;">$</div>
<div class="t" style="top:360.6px;font-size:12.8px;color:#1d4f7a;right:64.6px;">260.00</div>
<div class="t" style="top:360.6px;font-size:12.8px;color:#1d4f7a;left:1146.5px;">$</div>
<div class="t" style="top:379.6px;font-size:12.4px;color:#1f1f1f;left:814.55px;">6</div>
<div class="clip" style="left:836px;top:376px;width:40px;height:18px"><div class="t" style="left:-5.9px;top:3.4px;font-size:13.6px;color:#141414">one</div></div>
<div class="t" style="top:379.6px;font-size:12.8px;color:#141414;left:946.5px;">$</div>
<div class="t" style="top:379.6px;font-size:12.8px;color:#141414;right:164.2px;">888.00</div>
<div class="t" style="top:379.6px;font-size:12.8px;color:#141414;left:1046.5px;">$</div>
<div class="t" style="top:379.6px;font-size:12.8px;color:#141414;right:64.6px;">3.00</div>
<div class="t" style="top:379.6px;font-size:12.8px;color:#141414;left:1146.5px;">$</div>
<div class="t" style="top:399.6px;font-size:12.4px;color:#1f1f1f;left:814.55px;">7</div>
<div class="clip" style="left:836px;top:395px;width:40px;height:19px"><div class="t" style="left:-5.9px;top:4.4px;font-size:13.6px;color:#141414">one</div></div>
<div class="t" style="top:399.6px;font-size:12.8px;color:#141414;left:946.5px;">$</div>
<div class="t" style="top:399.6px;font-size:12.8px;color:#141414;right:164.2px;">2,470.00</div>
<div class="t" style="top:399.6px;font-size:12.8px;color:#141414;left:1046.5px;">$</div>
<div class="t" style="top:399.6px;font-size:12.8px;color:#141414;right:64.6px;">3.00</div>
<div class="t" style="top:399.6px;font-size:12.8px;color:#141414;left:1146.5px;">$</div>
<div class="t" style="top:418.6px;font-size:12.4px;color:#1f1f1f;left:814.55px;">8</div>
<div class="clip" style="left:836px;top:415px;width:40px;height:18px"><div class="t" style="left:-5.9px;top:3.4px;font-size:13.6px;color:#141414">one</div></div>
<div class="t" style="top:418.6px;font-size:12.8px;color:#141414;left:946.5px;">$</div>
<div class="t" style="top:418.6px;font-size:12.8px;color:#141414;right:164.2px;">1,513.00</div>
<div class="t" style="top:418.6px;font-size:12.8px;color:#141414;left:1046.5px;">$</div>
<div class="t" style="top:418.6px;font-size:12.8px;color:#141414;right:64.6px;">3.00</div>
<div class="t" style="top:418.6px;font-size:12.8px;color:#141414;left:1146.5px;">$</div>
<div class="a" style="left:802px;top:433px;width:33px;height:19px;background:#d2d2d2"></div>
<div class="a" style="left:833px;top:433px;width:2px;height:19px;background:#217346"></div>
<div class="t" style="top:437.6px;font-size:12.4px;color:#1f1f1f;left:814.55px;">9</div>
<div class="clip" style="left:836px;top:434px;width:40px;height:18px"><div class="t" style="left:-5.9px;top:3.4px;font-size:13.6px;color:#141414">one</div></div>
<div class="t" style="top:437.6px;font-size:12.8px;color:#141414;left:946.5px;">$</div>
<div class="t" style="top:437.6px;font-size:12.8px;color:#141414;right:164.2px;">921.00</div>
<div class="t" style="top:437.6px;font-size:12.8px;color:#141414;left:1046.5px;">$</div>
<div class="t" style="top:437.6px;font-size:12.8px;color:#141414;right:64.6px;">5.00</div>
<div class="t" style="top:437.6px;font-size:12.8px;color:#141414;left:1146.5px;">$</div>
<div class="t" style="top:457.6px;font-size:12.4px;color:#1f1f1f;left:811.1px;">10</div>
<div class="clip" style="left:836px;top:453px;width:40px;height:19px"><div class="t" style="left:-5.9px;top:4.4px;font-size:13.6px;color:#141414">one</div></div>
<div class="t" style="top:457.6px;font-size:12.8px;color:#141414;left:946.5px;">$</div>
<div class="t" style="top:457.6px;font-size:12.8px;color:#141414;right:164.2px;">2,518.00</div>
<div class="t" style="top:457.6px;font-size:12.8px;color:#141414;left:1046.5px;">$</div>
<div class="t" style="top:457.6px;font-size:12.8px;color:#141414;right:64.6px;">5.00</div>
<div class="t" style="top:457.6px;font-size:12.8px;color:#141414;left:1146.5px;">$</div>
<div class="t" style="top:476.6px;font-size:12.4px;color:#1f1f1f;left:811.56px;">11</div>
<div class="clip" style="left:836px;top:473px;width:40px;height:18px"><div class="t" style="left:-5.9px;top:3.4px;font-size:13.6px;color:#141414">one</div></div>
<div class="t" style="top:476.6px;font-size:12.8px;color:#141414;left:946.5px;">$</div>
<div class="t" style="top:476.6px;font-size:12.8px;color:#141414;right:164.2px;">1,899.00</div>
<div class="t" style="top:476.6px;font-size:12.8px;color:#141414;left:1046.5px;">$</div>
<div class="t" style="top:476.6px;font-size:12.8px;color:#141414;right:64.6px;">5.00</div>
<div class="t" style="top:476.6px;font-size:12.8px;color:#141414;left:1146.5px;">$</div>
<div class="hatch" style="left:835px;top:492px;width:336px;height:23px"></div>
<div class="t" style="top:520.6px;font-size:12.4px;color:#1f1f1f;left:811.1px;">12</div>
<div class="clip" style="left:836px;top:516px;width:40px;height:19px"><div class="t" style="left:-5.9px;top:4.4px;font-size:13.6px;color:#141414">one</div></div>
<div class="t" style="top:520.6px;font-size:12.8px;color:#141414;left:946.5px;">$</div>
<div class="t" style="top:520.6px;font-size:12.8px;color:#141414;right:164.2px;">2,470.00</div>
<div class="t" style="top:520.6px;font-size:12.8px;color:#141414;left:1046.5px;">$</div>
<div class="t" style="top:520.6px;font-size:12.8px;color:#141414;right:64.6px;">5.00</div>
<div class="t" style="top:520.6px;font-size:12.8px;color:#141414;left:1146.5px;">$</div>
<div class="t" style="top:540.6px;font-size:12.4px;color:#1f1f1f;left:811.1px;">13</div>
<div class="clip" style="left:836px;top:536px;width:40px;height:19px"><div class="t" style="left:-5.9px;top:4.4px;font-size:13.6px;color:#141414">one</div></div>
<div class="t" style="top:540.6px;font-size:12.8px;color:#141414;left:946.5px;">$</div>
<div class="t" style="top:540.6px;font-size:12.8px;color:#141414;right:164.2px;">2,665.50</div>
<div class="t" style="top:540.6px;font-size:12.8px;color:#141414;left:1046.5px;">$</div>
<div class="t" style="top:540.6px;font-size:12.8px;color:#141414;right:64.6px;">5.00</div>
<div class="t" style="top:540.6px;font-size:12.8px;color:#141414;left:1146.5px;">$</div>
<div class="hl" style="left:835px;top:307px;width:336px"></div>
<div class="hl" style="left:835px;top:326px;width:336px"></div>
<div class="hl" style="left:835px;top:350px;width:336px"></div>
<div class="hl" style="left:835px;top:375px;width:336px"></div>
<div class="hl" style="left:835px;top:394px;width:336px"></div>
<div class="hl" style="left:835px;top:414px;width:336px"></div>
<div class="hl" style="left:835px;top:433px;width:336px"></div>
<div class="hl" style="left:835px;top:452px;width:336px"></div>
<div class="hl" style="left:835px;top:472px;width:336px"></div>
<div class="hl" style="left:835px;top:491px;width:336px"></div>
<div class="hl" style="left:835px;top:515px;width:336px"></div>
<div class="hl" style="left:835px;top:535px;width:336px"></div>
<div class="hl" style="left:835px;top:286px;width:336px;background:#3f78b4"></div>
<div class="vl" style="left:938px;top:287px;height:268px"></div>
<div class="vl" style="left:1038px;top:287px;height:268px"></div>
<div class="vl" style="left:1138px;top:287px;height:268px"></div>
<div class="a" style="left:835px;top:263px;width:1px;height:292px;background:#4a6a8c"></div>
<div class="a" style="left:1171px;top:263px;width:1px;height:292px;background:#4f86bf"></div>
<div class="a" style="left:835px;top:554px;width:337px;height:1px;background:#3f6f9f"></div>
<div class="a" style="left:938px;top:351px;width:1px;height:24px;background:#8fc4ec"></div>
<div class="a" style="left:1038px;top:351px;width:1px;height:24px;background:#8fc4ec"></div>
<div class="a" style="left:1138px;top:351px;width:1px;height:24px;background:#8fc4ec"></div>
<div class="a" style="left:936px;top:431px;width:104px;height:23px;border:2px solid #217346"></div>
<div class="a" style="left:1036px;top:450px;width:6px;height:6px;background:#217346;border:1px solid #fff"></div>
<svg class="a" style="left:45px;top:562px" width="70" height="18" viewBox="0 0 70 18" fill="none"><path d="M9 3L2 9L9 15" stroke="#c4c4c4" stroke-width="1.600"/><path d="M27 5H39M27 7.700H39M27 10.400H39M27 13H39" stroke="#c2c2c2" stroke-width="2"/><path d="M56 3L63 9L56 15" stroke="#111" stroke-width="2"/></svg>
<div class="a" style="left:128px;top:555px;width:61px;height:27px;background:#fff;border-radius:0 0 4px 4px;overflow:hidden"><div class="t" style="left:4px;top:5.05px;font-weight:bold;font-size:12.500px;color:#111;transform:scaleX(.955);transform-origin:0 0">Sheet1 [13]</div><div class="a" style="left:3px;top:21px;width:61px;height:3px;background:#1f6fb8"></div></div>
<svg class="a" style="left:199px;top:563px" width="175" height="14" viewBox="0 0 175 14"><path d="M6 3.500V10.500L1 7Z" fill="#c6c6c6"/><path d="M168 3.500V10.500L173 7Z" fill="#c6c6c6"/><rect x="48" y="3.500" width="30" height="7" rx="3.500" fill="#c8c8c8"/><rect x="55" y="4.500" width="9" height="5" fill="#fdb913"/><rect x="71" y="4.500" width="9" height="5" fill="#fdb913"/></svg>
<svg class="a" style="left:442px;top:562px" width="70" height="18" viewBox="0 0 70 18" fill="none"><path d="M9 3L2 9L9 15" stroke="#c4c4c4" stroke-width="1.600"/><path d="M27 5H39M27 7.700H39M27 10.400H39M27 13H39" stroke="#c2c2c2" stroke-width="2"/><path d="M56 3L63 9L56 15" stroke="#111" stroke-width="2"/></svg>
<div class="a" style="left:526px;top:555px;width:61px;height:27px;background:#fff;border-radius:0 0 4px 4px;overflow:hidden"><div class="t" style="left:4px;top:5.05px;font-weight:bold;font-size:12.500px;color:#111;transform:scaleX(.955);transform-origin:0 0">Sheet1 [13]</div><div class="a" style="left:3px;top:21px;width:61px;height:3px;background:#1f6fb8"></div></div>
<svg class="a" style="left:596px;top:563px" width="175" height="14" viewBox="0 0 175 14"><path d="M6 3.500V10.500L1 7Z" fill="#c6c6c6"/><path d="M168 3.500V10.500L173 7Z" fill="#c6c6c6"/><rect x="48" y="3.500" width="30" height="7" rx="3.500" fill="#c8c8c8"/><rect x="55" y="4.500" width="9" height="5" fill="#fdb913"/><rect x="71" y="4.500" width="9" height="5" fill="#fdb913"/></svg>
<svg class="a" style="left:840px;top:562px" width="70" height="18" viewBox="0 0 70 18" fill="none"><path d="M9 3L2 9L9 15" stroke="#c4c4c4" stroke-width="1.600"/><path d="M27 5H39M27 7.700H39M27 10.400H39M27 13H39" stroke="#c2c2c2" stroke-width="2"/><path d="M56 3L63 9L56 15" stroke="#111" stroke-width="2"/></svg>
<div class="a" style="left:924px;top:555px;width:59px;height:27px;background:#fff;border-radius:0 0 4px 4px;overflow:hidden"><div class="t" style="left:4px;top:5.05px;font-weight:bold;font-size:12.500px;color:#111;transform:scaleX(.955);transform-origin:0 0">Sheet1 [13]</div><div class="a" style="left:3px;top:21px;width:59px;height:3px;background:#1f6fb8"></div></div>
<svg class="a" style="left:993px;top:563px" width="175" height="14" viewBox="0 0 175 14"><path d="M6 3.500V10.500L1 7Z" fill="#c6c6c6"/><path d="M168 3.500V10.500L173 7Z" fill="#c6c6c6"/><rect x="48" y="3.500" width="30" height="7" rx="3.500" fill="#c8c8c8"/><rect x="55" y="4.500" width="9" height="5" fill="#fdb913"/><rect x="71" y="4.500" width="9" height="5" fill="#fdb913"/></svg>
<div class="a" style="left:382.5px;top:240px;width:17px;height:316px;background:#f5f5f5"></div>
<svg class="a" style="left:384px;top:240px" width="14" height="316" viewBox="0 0 14 316"><path d="M3.300 10.500H10.700L7 5.500Z" fill="#c4c4c4"/><path d="M3.300 303.500H10.700L7 308.500Z" fill="#c4c4c4"/><circle cx="7" cy="21.500" r="4" fill="#c6c6c6"/><rect x="4.900" y="17.5" width="4.400" height="2.5" fill="#f4b41c"/><rect x="4.900" y="20" width="4.400" height="21.69999999999999" fill="#1f8a5a"/><rect x="4.900" y="26" width="4.400" height="4.5" fill="#f8b816"/><rect x="4.900" y="48" width="4.400" height="10" fill="#fdb913"/></svg>
<div class="a" style="left:779.5px;top:240px;width:17px;height:316px;background:#f5f5f5"></div>
<svg class="a" style="left:781px;top:240px" width="14" height="316" viewBox="0 0 14 316"><path d="M3.300 10.500H10.700L7 5.500Z" fill="#c4c4c4"/><path d="M3.300 303.500H10.700L7 308.500Z" fill="#c4c4c4"/><circle cx="7" cy="21.500" r="4" fill="#c6c6c6"/><rect x="4.900" y="18" width="4.400" height="2" fill="#f4b41c"/><rect x="4.900" y="20" width="4.400" height="5" fill="#d6604a"/><rect x="4.900" y="25" width="4.400" height="12" fill="#fbad18"/><rect x="4.900" y="44" width="4.400" height="3" fill="#fde0e6"/><rect x="4.900" y="48" width="4.400" height="10" fill="#fdb913"/><rect x="4.900" y="69" width="4.400" height="6" fill="#d6604a"/></svg>
<div class="a" style="left:1177px;top:240px;width:17px;height:316px;background:#f5f5f5"></div>
<svg class="a" style="left:1178.5px;top:240px" width="14" height="316" viewBox="0 0 14 316"><path d="M3.300 10.500H10.700L7 5.500Z" fill="#c4c4c4"/><path d="M3.300 303.500H10.700L7 308.500Z" fill="#c4c4c4"/><circle cx="7" cy="21.500" r="4" fill="#c6c6c6"/><rect x="4.900" y="18" width="4.400" height="7" fill="#d6604a"/><rect x="4.900" y="25" width="4.400" height="12" fill="#fdb913"/><rect x="4.900" y="48" width="4.400" height="10" fill="#fdb913"/><rect x="4.900" y="69" width="4.400" height="12" fill="#d6604a"/></svg>
<div class="a" style="left:626px;top:363px;width:192px;height:72px;border:1px solid #8a8a8a;background:#e9f0dd"><div class="a" style="left:0;top:26px;width:190px;height:23px;background:#fbc5c5"></div><div class="a" style="left:0;top:49px;width:190px;height:21px;background:#dff8fc"></div><div class="a" style="left:48px;top:0;width:1px;height:70px;background:rgba(0,0,0,.06)"></div><div class="a" style="left:110px;top:0;width:1px;height:70px;background:rgba(0,0,0,.06)"></div></div>
<div class="t" style="top:372.5px;font-size:12px;font-weight:bold;color:#111;left:645.9px;transform:scaleX(0.94);transform-origin:0 0;">E4</div>
<div class="t" style="top:372.5px;font-size:12px;color:#1a1a1a;left:680.9px;transform:scaleX(0.97);transform-origin:0 0;">Value</div>
<div class="t" style="top:372.5px;font-size:12px;color:#1a1a1a;right:385.9px;transform:scaleX(0.92);transform-origin:100% 0;">$2,178.00</div>
<div class="t" style="top:396px;font-size:12px;font-weight:bold;color:#111;left:645.9px;transform:scaleX(0.94);transform-origin:0 0;">E4</div>
<div class="t" style="top:396px;font-size:12px;color:#1a1a1a;left:680.9px;transform:scaleX(0.97);transform-origin:0 0;">Value</div>
<div class="t" style="top:396px;font-size:12px;color:#1a1a1a;right:385.9px;transform:scaleX(0.92);transform-origin:100% 0;">$2,179.00</div>
<div class="t" style="top:419px;font-size:12px;font-weight:bold;color:#111;left:645.9px;transform:scaleX(0.94);transform-origin:0 0;">E4</div>
<div class="t" style="top:419px;font-size:12px;color:#1a1a1a;left:680.9px;transform:scaleX(0.97);transform-origin:0 0;">Value</div>
<div class="t" style="top:419px;font-size:12px;color:#1a1a1a;right:385.9px;transform:scaleX(0.92);transform-origin:100% 0;">$2,178.00</div>
<div class="a" style="left:5px;top:617px;width:1188px;height:9px;background:repeating-linear-gradient(135deg,#ececec 0,#ececec 1.1px,#c0c0c0 1.3px,#c0c0c0 2px,#ececec 2.12px)"></div>
<svg class="a" style="left:14px;top:641px" width="15" height="18" viewBox="0 0 15 18" fill="none" stroke="#333" stroke-width="1.100"><rect x="3.500" y="1.500" width="8.500" height="9.500" fill="#fff"/><rect x="8" y="2" width="3.500" height="9" fill="#c4c4c4" stroke="none"/><path d="M1 11.500H14M7.500 11.500V17.500"/></svg>
<div class="btn" style="left:40px;width:103px"></div>
<div class="t" style="top:643.7px;font-size:12px;font-weight:bold;color:#111;left:54.4px;transform:scaleX(0.98);transform-origin:0 0;">Sheets: 13</div>
<svg class="a" style="left:130px;top:646px" width="12" height="9" viewBox="0 0 12 9" fill="none"><path d="M1.500 2L6 6.500L10.500 2" stroke="#111" stroke-width="1.800"/></svg>
<div class="btn" style="left:158px;width:107px"></div>
<div class="t" style="top:643.7px;font-size:12px;left:172.7px;transform:scaleX(0.97);transform-origin:0 0;">Added Rows: 4</div>
<div class="btn" style="left:268px;width:112px"></div>
<div class="t" style="top:643.7px;font-size:12px;left:282.7px;transform:scaleX(0.95);transform-origin:0 0;">Deleted Rows: 3</div>
<div class="btn" style="left:383px;width:66px"></div>
<div class="t" style="top:643.7px;font-size:12px;left:397.7px;transform:scaleX(0.95);transform-origin:0 0;">Cells: 6</div>
<div class="btn" style="left:452px;width:75px"></div>
<div class="t" style="top:643.7px;font-size:12px;left:466.4px;transform:scaleX(0.96);transform-origin:0 0;">Values: 6</div>
<div class="btn" style="left:542px;width:78px"></div>
<div class="t" style="top:643.7px;font-size:12px;left:578.4px;transform:scaleX(1.05);transform-origin:0 0;">Copy</div>
<svg class="a" style="left:549px;top:641px" width="18" height="18" viewBox="0 0 18 18" fill="none" stroke="#333" stroke-width="1"><path d="M5.500 3.500V1.500H1.500V12.500H5"/><path d="M5.500 3.500H12L16.500 8V16.500H5.500Z" fill="#fff"/><path d="M12 3.500V8H16.500"/></svg>
<div class="btn" style="left:623px;width:120px"></div>
<div class="t" style="top:643.7px;font-size:12px;left:666px;transform:scaleX(0.9);transform-origin:0 0;">Export XLSX</div>
<svg class="a" style="left:632.5px;top:640.5px" width="20" height="20" viewBox="0 0 20 20" fill="none"><path d="M3.500 8V1.500H10L13.500 5V8" stroke="#666" stroke-width="1"/><path d="M4 10V14.500H6.500M5 12.500L7 14.500L5 16.500" stroke="#e0523a" stroke-width="1"/><rect x="8.500" y="8.500" width="10" height="9" fill="#e4f5ea" stroke="#2ea35b"/><path d="M11 10.500L16 15.500M16 10.500L11 15.500" stroke="#2ea35b" stroke-width="1.200"/></svg>
<div class="a" style="left:758px;top:632px;width:36px;height:36px;background:#e3e3e3;border:1px solid #cfcfcf"></div>
<svg class="a" style="left:766px;top:640px" width="20" height="20" viewBox="0 0 20 20" fill="none" stroke="#e0485a" stroke-width="1.200"><circle cx="10" cy="10" r="7.500"/><path d="M4.800 15.200L15.200 4.800"/></svg>
<svg class="a" style="left:808px;top:644px" width="13" height="13" viewBox="0 0 13 13" fill="#e9bde9" stroke="#9a5a9e"><rect x="1.500" y="1" width="4" height="10.500"/><rect x="7.500" y="1" width="4" height="10.500"/></svg>
<svg class="a" style="left:846px;top:644px" width="14" height="13" viewBox="0 0 14 13" fill="#e9bde9" stroke="#9a5a9e"><rect x="1" y="1.500" width="12" height="3.500"/><rect x="1" y="7.500" width="12" height="3.500"/></svg>
<div class="a" style="left:8px;top:670px;width:1183px;height:221px;background:#fff;border:1px solid #5a5a5a"></div><div class="a" style="left:8px;top:890px;width:1166px;height:2px;background:#4a4a4a"></div>
<div class="t" style="top:677px;font-size:12px;color:#1c1c1c;left:91.32px;">Sheet</div>
<div class="t" style="top:677px;font-size:12px;color:#1c1c1c;left:233.32px;">Range</div>
<div class="t" style="top:677px;font-size:12px;color:#1c1c1c;left:406.49px;">Mine</div>
<div class="t" style="top:677px;font-size:12px;color:#1c1c1c;left:645.32px;">Base</div>
<div class="t" style="top:677px;font-size:12px;color:#1c1c1c;left:882.33px;">Theirs</div>
<div class="t" style="top:677px;font-size:12px;color:#1c1c1c;left:1053.17px;">%</div>
<div class="a" style="left:9px;top:696px;width:1163px;height:24px;background:#0a77d8"></div>
<div class="a" style="left:1172px;top:696px;width:18px;height:194px;background:#f4f4f4"></div>
<div class="a" style="left:1173px;top:712px;width:16px;height:107px;background:#c3c4ca"></div>
<svg class="a" style="left:1176px;top:700px" width="10" height="8" viewBox="0 0 10 8" fill="none" stroke="#c4c4c4" stroke-width="1.400"><path d="M2 5.500L5 2.500L8 5.500"/></svg>
<svg class="a" style="left:1176px;top:876px" width="10" height="8" viewBox="0 0 10 8" fill="none" stroke="#c4c4c4" stroke-width="1.400"><path d="M2 2.500L5 5.500L8 2.500"/></svg>
<div class="a" style="left:9px;top:694px;width:1181px;height:1px;background:#5a5a5a"></div>
<div class="a" style="left:9px;top:720px;width:1163px;height:1px;background:#5a5a5a"></div>
<div class="a" style="left:9px;top:744px;width:1163px;height:1px;background:#5a5a5a"></div>
<div class="a" style="left:9px;top:769px;width:1163px;height:1px;background:#5a5a5a"></div>
<div class="a" style="left:9px;top:793px;width:1163px;height:1px;background:#5a5a5a"></div>
<div class="a" style="left:9px;top:818px;width:1163px;height:1px;background:#5a5a5a"></div>
<div class="a" style="left:9px;top:842px;width:1163px;height:1px;background:#5a5a5a"></div>
<div class="a" style="left:9px;top:866px;width:1163px;height:1px;background:#5a5a5a"></div>
<div class="a" style="left:201px;top:671px;width:1px;height:220px;background:#5a5a5a"></div>
<div class="a" style="left:297px;top:671px;width:1px;height:220px;background:#5a5a5a"></div>
<div class="a" style="left:537px;top:671px;width:1px;height:220px;background:#5a5a5a"></div>
<div class="a" style="left:777px;top:671px;width:1px;height:220px;background:#5a5a5a"></div>
<div class="a" style="left:1017px;top:671px;width:1px;height:220px;background:#5a5a5a"></div>
<div class="a" style="left:1094px;top:671px;width:1px;height:220px;background:#5a5a5a"></div>
<div class="a" style="left:17px;top:703px;width:10px;height:10px;background:#fad488;border:1px solid #e5a052"></div>
<div class="t" style="top:702px;font-size:12px;color:#fff;left:40.7px;transform:scaleX(0.92);transform-origin:0 0;">Sheet1</div>
<div class="t" style="top:702px;font-size:12px;color:#fff;left:207.7px;transform:scaleX(0.87);transform-origin:0 0;">E4</div>
<div class="t" style="top:702px;font-size:12px;color:#fff;right:667.4px;transform:scaleX(0.91);transform-origin:100% 0;">$2,178.00</div>
<div class="t" style="top:702px;font-size:12px;color:#fff;right:427.4px;transform:scaleX(0.91);transform-origin:100% 0;">$2,179.00</div>
<div class="t" style="top:702px;font-size:12px;color:#fff;right:187.4px;transform:scaleX(0.91);transform-origin:100% 0;">$2,178.00</div>
<div class="t" style="top:702px;font-size:12px;color:#fff;right:110.4px;transform:scaleX(0.92);transform-origin:100% 0;">-0.05%</div>
<div class="a" style="left:14px;top:728px;width:16px;height:7px;background:#93dfae;border:1px solid #30ad69"></div>
<div class="t" style="top:726px;font-size:12px;color:#1a1a1a;left:40.7px;transform:scaleX(0.92);transform-origin:0 0;">Sheet1</div>
<div class="t" style="top:726px;font-size:12px;color:#1a1a1a;left:207.7px;transform:scaleX(0.95);transform-origin:0 0;">5:5</div>
<div class="t" style="top:726px;font-size:12px;color:#1a1a1a;left:783.9px;transform:scaleX(0.96);transform-origin:0 0;">Small Business\UAE\VTT</div>
<div class="a" style="left:14px;top:752px;width:16px;height:7px;background:#f7b3b8;border:1px solid #e0606a"></div>
<div class="t" style="top:750px;font-size:12px;color:#1a1a1a;left:40.7px;transform:scaleX(0.92);transform-origin:0 0;">Sheet1</div>
<div class="t" style="top:750px;font-size:12px;color:#1a1a1a;left:207.7px;transform:scaleX(0.97);transform-origin:0 0;">11:11</div>
<div class="t" style="top:750px;font-size:12px;color:#1a1a1a;left:303.9px;">Channel Partners\Germany\Montana</div>
<div class="t" style="top:750px;font-size:12px;color:#1a1a1a;left:543.9px;">Channel Partners\Germany\Montana</div>
<div class="a" style="left:14px;top:777px;width:16px;height:7px;background:#f7b3b8;border:1px solid #e0606a"></div>
<div class="t" style="top:775px;font-size:12px;color:#1a1a1a;left:40.7px;transform:scaleX(0.92);transform-origin:0 0;">Sheet1</div>
<div class="t" style="top:775px;font-size:12px;color:#1a1a1a;left:207.7px;transform:scaleX(0.93);transform-origin:0 0;">18:18</div>
<div class="t" style="top:775px;font-size:12px;color:#1a1a1a;left:303.9px;">Government\Canada\Paseo</div>
<div class="t" style="top:775px;font-size:12px;color:#1a1a1a;left:543.9px;">Government\Canada\Paseo</div>
<div class="a" style="left:17px;top:800px;width:10px;height:10px;background:#fad488;border:1px solid #e5a052"></div>
<div class="t" style="top:799px;font-size:12px;color:#1a1a1a;left:40.7px;transform:scaleX(0.92);transform-origin:0 0;">Sheet1</div>
<div class="t" style="top:799px;font-size:12px;color:#1a1a1a;left:207.7px;transform:scaleX(0.88);transform-origin:0 0;">E22</div>
<div class="t" style="top:799px;font-size:12px;color:#1a1a1a;right:667.4px;transform:scaleX(0.92);transform-origin:100% 0;">$370.00</div>
<div class="t" style="top:799px;font-size:12px;color:#1a1a1a;right:427.4px;transform:scaleX(0.92);transform-origin:100% 0;">$367.00</div>
<div class="t" style="top:799px;font-size:12px;color:#1a1a1a;right:110.4px;transform:scaleX(0.93);transform-origin:100% 0;">0.81%</div>
<div class="a" style="left:17px;top:825px;width:10px;height:10px;background:#fad488;border:1px solid #e5a052"></div>
<div class="t" style="top:824px;font-size:12px;color:#1a1a1a;left:40.7px;transform:scaleX(0.92);transform-origin:0 0;">Sheet1</div>
<div class="t" style="top:824px;font-size:12px;color:#1a1a1a;left:207.7px;transform:scaleX(0.92);transform-origin:0 0;">G33</div>
<div class="t" style="top:824px;font-size:12px;color:#1a1a1a;right:427.4px;transform:scaleX(0.93);transform-origin:100% 0;">$7.00</div>
<div class="t" style="top:824px;font-size:12px;color:#1a1a1a;right:187.4px;transform:scaleX(0.93);transform-origin:100% 0;">$9.00</div>
<div class="a" style="left:14px;top:850px;width:16px;height:7px;background:#93dfae;border:1px solid #30ad69"></div>
<div class="t" style="top:848px;font-size:12px;color:#1a1a1a;left:40.7px;transform:scaleX(0.92);transform-origin:0 0;">Sheet1</div>
<div class="t" style="top:848px;font-size:12px;color:#1a1a1a;left:207.7px;transform:scaleX(0.93);transform-origin:0 0;">34:34</div>
<div class="clip" style="left:300.5px;top:843px;width:232.7px;height:23px"><div class="t" style="left:0;top:5px;transform:scaleX(1.02);transform-origin:0 0;color:#1a1a1a">Midmarket\United States of America\Montana</div></div>
<div class="a" style="left:14px;top:874px;width:16px;height:7px;background:#93dfae;border:1px solid #30ad69"></div>
<div class="t" style="top:872px;font-size:12px;color:#1a1a1a;left:40.7px;transform:scaleX(0.92);transform-origin:0 0;">Sheet1</div>
<div class="t" style="top:872px;font-size:12px;color:#1a1a1a;left:207.7px;transform:scaleX(0.93);transform-origin:0 0;">46:46</div>
<div class="t" style="top:872px;font-size:12px;color:#1a1a1a;left:303.9px;">Government\Canada\Velo</div>
</body></html>
